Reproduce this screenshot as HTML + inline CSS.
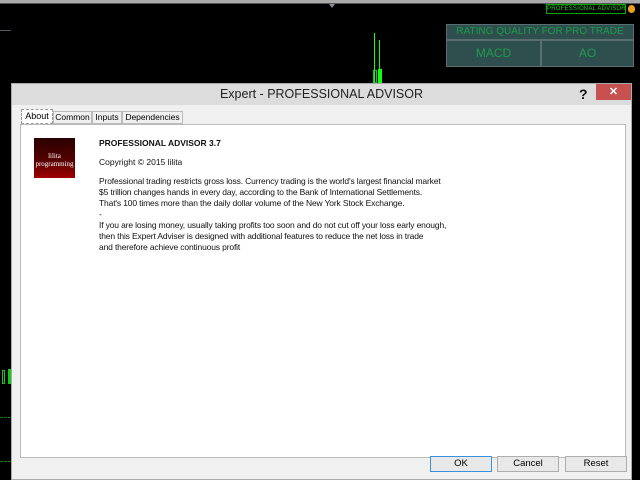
<!DOCTYPE html>
<html><head><meta charset="utf-8"><style>
*{margin:0;padding:0;box-sizing:border-box}
body{width:640px;height:480px;background:#000;position:relative;overflow:hidden;font-family:"Liberation Sans",sans-serif}
.abs{position:absolute}
.t{white-space:nowrap;overflow:hidden}
</style></head><body>
<div class="abs" style="left:0;top:0;width:640px;height:3px;background:#aaa"></div>
<div class="abs" style="left:0;top:3px;width:640px;height:1px;background:#555"></div>
<div class="abs" style="left:0;top:30px;width:11px;height:1px;background:#556"></div>
<div class="abs" style="left:329px;top:4px;width:0;height:0;border-left:3px solid transparent;border-right:3px solid transparent;border-top:4px solid #889"></div>
<div class="abs t" style="left:546px;top:4px;width:80px;height:10px;border:1px solid #0a0;color:#2c2;font-size:6px;line-height:8px;text-align:center;letter-spacing:0.2px">PROFESSIONAL ADVISOR</div>
<div class="abs" style="left:628px;top:5px;width:7px;height:8px;border-radius:4px;background:#e8a020"></div>
<div class="abs t" style="left:446px;top:24px;width:188px;height:16px;background:#2f4f4f;border:1px solid #5a7070;color:#1c9c4c;font-size:10px;text-align:center;line-height:14px">RATING QUALITY FOR PRO TRADE</div>
<div class="abs" style="left:446px;top:40px;width:95px;height:27px;background:#2f4f4f;border:1px solid #5a7070;color:#1c9c4c;font-size:12px;text-align:center;line-height:25px">MACD</div>
<div class="abs" style="left:541px;top:40px;width:93px;height:27px;background:#2f4f4f;border:1px solid #5a7070;color:#1c9c4c;font-size:12px;text-align:center;line-height:25px">AO</div>
<div class="abs" style="left:374px;top:33px;width:1px;height:50px;background:#1f1"></div>
<div class="abs" style="left:373px;top:70px;width:4px;height:13px;border:1px solid #1c1"></div>
<div class="abs" style="left:379px;top:40px;width:1px;height:43px;background:#1f1"></div>
<div class="abs" style="left:378px;top:69px;width:4px;height:14px;background:#1f1"></div>
<div class="abs" style="left:2px;top:370px;width:3px;height:14px;border:1px solid #1c1"></div>
<div class="abs" style="left:8px;top:369px;width:3px;height:15px;background:#1c1"></div>
<div class="abs" style="left:0;top:417px;width:11px;height:1px;border-top:1px dashed #171"></div>
<div class="abs" style="left:0;top:461px;width:11px;height:1px;border-top:1px dashed #171"></div>

<div class="abs" style="left:11px;top:83px;width:621px;height:397px;background:#f0f0f0;border:1px solid #aaa">
 <div class="abs" style="left:0;top:0;width:619px;height:21px;background:#dcdcdc;text-align:center;font-size:12.5px;line-height:21px;color:#222">Expert - PROFESSIONAL ADVISOR</div>
 <div class="abs" style="left:567px;top:0;width:14px;height:20px;font-size:14px;font-weight:bold;line-height:20px;color:#111">?</div>
 <div class="abs" style="left:584px;top:0;width:35px;height:16px;background:#c75050;color:#fff;text-align:center;font-size:11px;line-height:16px;font-weight:bold">✕</div>
 <div class="abs t" style="left:9px;top:25px;width:32px;height:15px;background:#fff;border:1px dashed #999;font-size:9px;line-height:13px;text-align:center">About</div>
 <div class="abs t" style="left:41px;top:27px;width:39px;height:13px;background:#f0f0f0;border:1px solid #bbb;font-size:8.5px;line-height:11px;text-align:center">Common</div>
 <div class="abs t" style="left:80px;top:27px;width:30px;height:13px;border:1px solid #bbb;font-size:8.5px;line-height:11px;text-align:center">Inputs</div>
 <div class="abs t" style="left:110px;top:27px;width:61px;height:13px;border:1px solid #bbb;font-size:8.5px;line-height:11px;text-align:center">Dependencies</div>
 <div class="abs" style="left:8px;top:40px;width:606px;height:334px;background:#fff;border:1px solid #bbb">
  <div class="abs" style="left:13px;top:13px;width:41px;height:40px;background:linear-gradient(#2a0000,#5a0000 60%,#a00000);color:#fff;font-family:'Liberation Serif',serif;font-size:7px;text-align:center;padding-top:14px;line-height:8px">lilita<br>programming</div>
  <div class="abs t" style="left:78px;top:13px;font-size:8.5px;font-weight:bold;color:#111">PROFESSIONAL ADVISOR 3.7</div>
  <div class="abs t" style="left:78px;top:32px;font-size:8.5px;color:#111">Copyright © 2015 lilita</div>
  <div class="abs" style="left:78px;top:51px;font-size:8.5px;line-height:11px;color:#111;white-space:pre;letter-spacing:-0.15px">Professional trading restricts gross loss. Currency trading is the world's largest financial market
$5 trillion changes hands in every day, according to the Bank of International Settlements.
That's 100 times more than the daily dollar volume of the New York Stock Exchange.
-
If you are losing money, usually taking profits too soon and do not cut off your loss early enough,
then this Expert Adviser is designed with additional features to reduce the net loss in trade
and therefore achieve continuous profit</div>
 </div>
 <div class="abs" style="left:418px;top:372px;width:62px;height:16px;background:#e8e8e8;border:1px solid #3c8fdd;font-size:9.5px;line-height:14px;text-align:center">OK</div>
 <div class="abs" style="left:485px;top:372px;width:62px;height:16px;background:#e8e8e8;border:1px solid #adadad;font-size:9.5px;line-height:14px;text-align:center">Cancel</div>
 <div class="abs" style="left:553px;top:372px;width:62px;height:16px;background:#e8e8e8;border:1px solid #adadad;font-size:9.5px;line-height:14px;text-align:center">Reset</div>
</div>
</body></html>
